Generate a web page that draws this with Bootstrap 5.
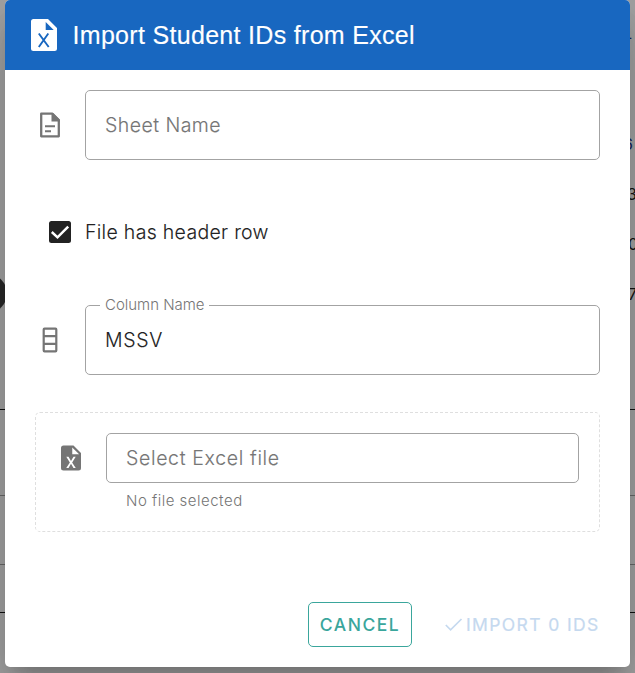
<!DOCTYPE html>
<html lang="en">
<head>
<meta charset="utf-8">
<meta name="viewport" content="width=device-width, initial-scale=1">
<title>Import Student IDs from Excel</title>
<link href="https://cdn.jsdelivr.net/npm/bootstrap@5.3.0/dist/css/bootstrap.min.css" rel="stylesheet">
<style>
body{height:673px;background:#a3a3a3;font-family:Inter,"Liberation Sans",sans-serif;color:#222}
.backdrop-page{position:absolute;inset:0;overflow:hidden;font-size:16px;color:#151515}
.rule{position:absolute;left:0;right:0;height:1px;background:#111}
.rule.faint{background:#686868}
.knob{position:absolute;left:-33px;top:274px;width:40px;height:39px;border-radius:20px;background:#282828}
.digit{position:absolute;left:627px;line-height:20px}
.link-digit{color:#14235c}
.dialog-box{position:relative;width:625px;height:667px;margin-left:5px;border-radius:5px;overflow:hidden;box-shadow:0 14px 19px -9px rgba(0,0,0,.2),0 30px 48px 4px rgba(0,0,0,.12),0 11px 58px 10px rgba(0,0,0,.08)}
.dialog-head{height:70px;padding-left:26px;background:#1867c0;font-family:"Liberation Sans",Arial,sans-serif;font-size:25px;color:#fff}
.dialog-head span{margin-left:15.5px;padding-top:2px;letter-spacing:.31px;-webkit-text-stroke:.15px #fff}
.dialog-body{padding:20px 30px 0}
.icon-col{width:50px;flex:none;padding-left:0}
.field{height:70px;border:1px solid #a3a3a3;border-radius:5px;padding:0 19px;font-size:19.5px;line-height:28px}
.field-label{color:#757575;font-weight:300;-webkit-text-stroke:.12px #757575}
.check-row{height:45px;margin:49px 0 51px;padding-left:13px;font-size:19.5px}
.check-row span{margin-left:13px;padding-top:3px;-webkit-text-stroke:.1px #222}
.float-label{position:absolute;left:14px;top:-11px;padding:0 5px;background:#fff;color:#757575;font-size:15px;line-height:20px;font-weight:300}
.drop-zone{height:120px;margin-top:37px;border:1px dashed #dfdfdf;border-radius:5px;padding:20px}
.drop-zone .icon-col{padding-top:9.500px}
.drop-zone .field{height:50px}
.hint{font-size:15px;line-height:15px;color:#757575;font-weight:300;padding:10px 20px 0}
.actions{height:45px;margin-top:70px}
.actions .btn{height:45px;padding:2px 0 0;font-size:17.5px;font-weight:500}
.btn-cancel{--bs-btn-color:#3aa69c;--bs-btn-border-color:#3aa69c;--bs-btn-border-radius:5px;width:104px;letter-spacing:1.5px}
.actions .btn-import{--bs-btn-disabled-color:#c5d9ef;--bs-btn-disabled-opacity:1;--bs-btn-disabled-border-color:transparent;margin-left:32px;width:156px;font-weight:400;letter-spacing:1.38px;white-space:nowrap;-webkit-text-stroke:.2px #c5d9ef}
.t-sheet{letter-spacing:.45px}.t-check{letter-spacing:.3px}.t-column{letter-spacing:-.02px}.t-value{letter-spacing:.7px;font-weight:300;-webkit-text-stroke:.1px #222}.t-file{letter-spacing:.66px}.t-hint{letter-spacing:.5px}
svg{flex:none;display:block}
</style>
</head>
<body class="position-relative overflow-hidden">
<div class="backdrop-page" aria-hidden="true">
  <div class="knob"></div>
  <div class="rule" style="top:409px"></div><div class="rule faint" style="top:495px"></div><div class="rule faint" style="top:564px"></div><div class="rule" style="top:612px"></div>
  <span class="digit link-digit" style="top:27px;left:625px">-</span>
  <span class="digit link-digit" style="top:134px;left:623px">6</span>
  <span class="digit" style="top:184px">3</span>
  <span class="digit" style="top:234px;left:628px">0</span>
  <span class="digit" style="top:284px;left:628px">7</span>
</div>
<main class="dialog-box bg-white">
  <header class="dialog-head d-flex align-items-center">
    <svg width="26" height="32" viewBox="0 0 26 32"><path fill="#fff" fill-rule="evenodd" d="M2.500 0H17L26 9V29.500Q26 32 23.500 32H2.500Q0 32 0 29.500V2.500Q0 0 2.500 0ZM14.700 3V11H22.700Z"/><path d="M7.800 14.500 17.700 28M17.300 14.500 7.800 28" stroke="#1867c0" stroke-width="1.900" fill="none"/></svg>
    <span>Import Student IDs from Excel</span>
  </header>
  <div class="dialog-body">
    <div class="d-flex align-items-center">
      <div class="icon-col"><svg width="30" height="30" viewBox="0 0 30 30"><path d="M6.200 3.700H17.500L23.800 10V26.300H6.200Z" fill="none" stroke="#757575" stroke-width="2.300" stroke-linejoin="round"/><path d="M16.500 3H18L25 10V11.500H16.500Z" fill="#757575"/><path d="M10 16.300H20M10 21.300H16" stroke="#757575" stroke-width="2"/></svg></div>
      <div class="field flex-grow-1 d-flex align-items-center"><span class="field-label t-sheet">Sheet Name</span></div>
    </div>
    <div class="check-row d-flex align-items-center">
      <svg width="24" height="24" viewBox="0 0 24 24"><rect x="1" y="1" width="22" height="22" rx="2.500" fill="#222"/><path d="M3.800 12 9.500 17.300 20.200 6.700" fill="none" stroke="#fff" stroke-width="2.500"/></svg>
      <span class="t-check fw-light">File has header row</span>
    </div>
    <div class="d-flex align-items-center">
      <div class="icon-col"><svg width="30" height="30" viewBox="0 0 30 30"><path d="M9.500 3.700H20.500Q21.300 3.700 21.300 4.500V25.500Q21.300 26.300 20.500 26.300H9.500Q8.700 26.300 8.700 25.500V4.500Q8.700 3.700 9.500 3.700ZM8.700 11.200H21.300M8.700 18.800H21.300" fill="none" stroke="#757575" stroke-width="2.200"/></svg></div>
      <div class="field position-relative flex-grow-1 d-flex align-items-center"><span class="float-label t-column">Column Name</span><span class="t-value">MSSV</span></div>
    </div>
    <div class="drop-zone d-flex align-items-start">
      <div class="icon-col"><svg width="30" height="30" viewBox="0 0 24 24"><path fill="#757575" d="M14,2H6A2,2 0 0,0 4,4V20A2,2 0 0,0 6,22H18A2,2 0 0,0 20,20V8L14,2M15.800,20H14L12,16.600L10,20H8.200L11.100,15.500L8.200,11H10L12,14.400L14,11H15.800L12.900,15.500L15.800,20M13,9V3.500L18.500,9H13Z"/></svg></div>
      <div class="flex-grow-1">
        <div class="field d-flex align-items-center"><span class="field-label t-file">Select Excel file</span></div>
        <div class="hint t-hint">No file selected</div>
      </div>
    </div>
    <div class="actions d-flex justify-content-end">
      <button type="button" class="btn btn-cancel">CANCEL</button>
      <button type="button" class="btn btn-import d-flex align-items-center" disabled><svg width="21" height="20" viewBox="0 0 21 20"><path d="M.8 9 5.600 13.800 16.500 3" fill="none" stroke="currentColor" stroke-width="1.700"/></svg>IMPORT 0 IDS</button>
    </div>
  </div>
</main>
<script src="https://cdn.jsdelivr.net/npm/bootstrap@5.3.0/dist/js/bootstrap.bundle.min.js"></script>
</body>
</html>
